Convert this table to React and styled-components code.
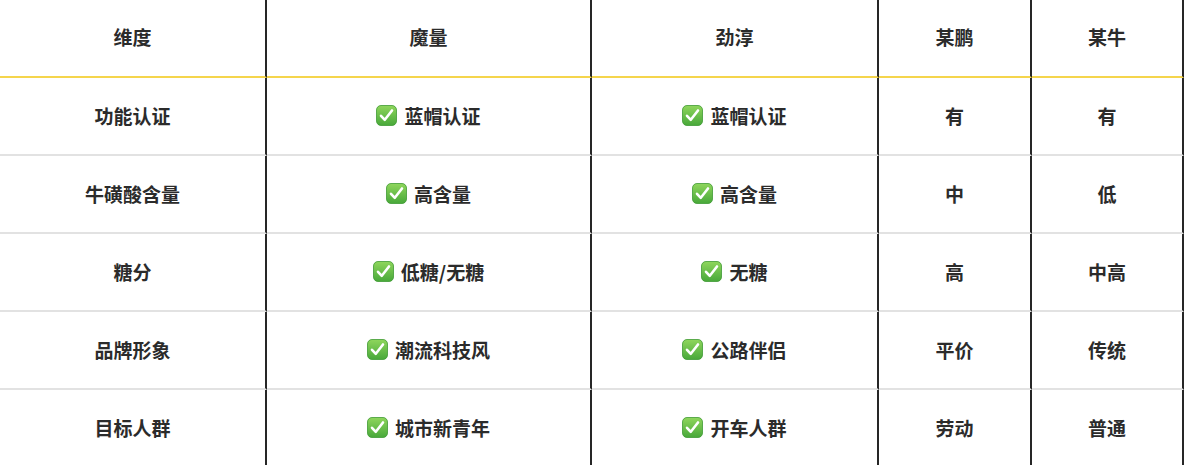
import React from "react";
import styled, { createGlobalStyle } from "styled-components";

const Global = createGlobalStyle`
  html, body { margin: 0; padding: 0; background: #fff; }
  body { font-family: "Noto Sans CJK SC", "Noto Sans", sans-serif; }
`;

const Grid = styled.div`
  display: grid;
  grid-template-columns: 267px 325px 287px 153px 152px;
  width: 1184px;
`;

const Cell = styled.div`
  box-sizing: border-box;
  height: 78px;
  border-right: 2px solid #262626;
  border-bottom: 2px solid ${(p) => (p.$head ? "#f5d54c" : "#e2e2e2")};
  display: flex;
  align-items: center;
  justify-content: center;
  gap: 7px;
  font-size: 19px;
  font-weight: 700;
  color: #2b2b2b;
  line-height: 1;
  padding-bottom: ${(p) => (p.$head ? 4 : 2)}px;
`;

const CheckBox = styled.svg`
  width: 21px;
  height: 21px;
  flex: none;
`;

const Check = () => (
  <CheckBox viewBox="0 0 21 21">
    <defs>
      <linearGradient id="cg" x1="0" y1="0" x2="0" y2="1">
        <stop offset="0" stopColor="#8fd65c" />
        <stop offset="1" stopColor="#48a83a" />
      </linearGradient>
    </defs>
    <rect x="0.5" y="0.5" width="20" height="20" rx="4.5" fill="url(#cg)" stroke="#3f9a33" strokeWidth="0.8" />
    <path d="M5 10.8 L8.8 14.8 L16 5.5" fill="none" stroke="#fff" strokeWidth="2.6" strokeLinecap="round" strokeLinejoin="round" />
  </CheckBox>
);

const header = ["维度", "魔量", "劲淳", "某鹏", "某牛"];
const rows = [
  ["功能认证", "蓝帽认证", "蓝帽认证", "有", "有"],
  ["牛磺酸含量", "高含量", "高含量", "中", "低"],
  ["糖分", "低糖/无糖", "无糖", "高", "中高"],
  ["品牌形象", "潮流科技风", "公路伴侣", "平价", "传统"],
  ["目标人群", "城市新青年", "开车人群", "劳动", "普通"],
];

export default function App() {
  return (
    <>
      <Global />
      <Grid>
        {header.map((h, i) => (
          <Cell key={"h" + i} $head>
            {h}
          </Cell>
        ))}
        {rows.map((r, ri) =>
          r.map((c, ci) => (
            <Cell key={ri + "-" + ci}>
              {(ci === 1 || ci === 2) && <Check />}
              <span>{c}</span>
            </Cell>
          ))
        )}
      </Grid>
    </>
  );
}
